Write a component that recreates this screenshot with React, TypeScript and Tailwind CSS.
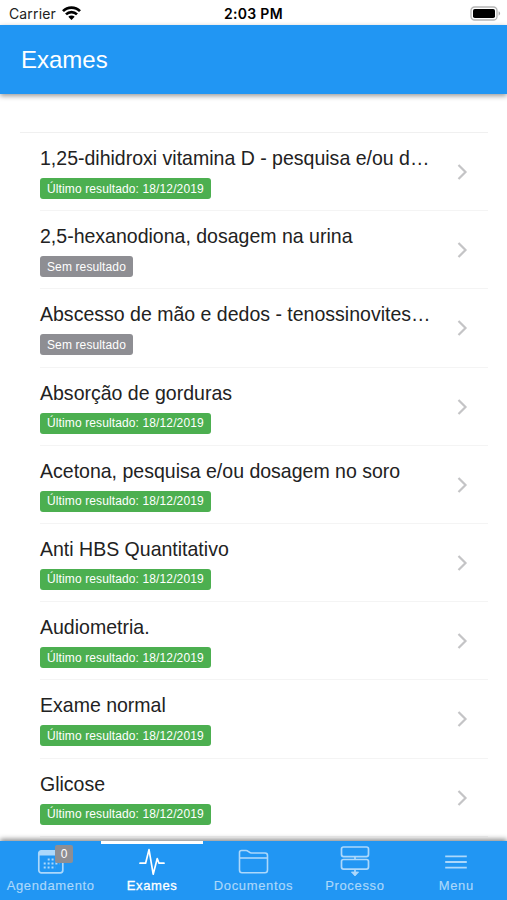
import type { ReactNode } from "react";

type Exam = {
  name: string;
  result?: string;
};

const exams: Exam[] = [
  { name: "1,25-dihidroxi vitamina D - pesquisa e/ou d…", result: "18/12/2019" },
  { name: "2,5-hexanodiona, dosagem na urina" },
  { name: "Abscesso de mão e dedos - tenossinovites…" },
  { name: "Absorção de gorduras", result: "18/12/2019" },
  { name: "Acetona, pesquisa e/ou dosagem no soro", result: "18/12/2019" },
  { name: "Anti HBS Quantitativo", result: "18/12/2019" },
  { name: "Audiometria.", result: "18/12/2019" },
  { name: "Exame normal", result: "18/12/2019" },
  { name: "Glicose", result: "18/12/2019" },
];

function StatusBar() {
  return (
    <div className="grid h-[25px] shrink-0 grid-cols-3 items-center bg-white pt-[3px] font-[Inter,sans-serif] text-black">
      <div className="flex items-center gap-[6px] pl-[9px]">
        <span className="text-[14px] leading-none tracking-[0.01em] text-[#222]">Carrier</span>
        <svg width="19" height="14" viewBox="0 0 19 14" className="-mt-[2px]">
          <g fill="none" stroke="#000" strokeWidth="2.7">
            <path d="M1 5.1A12 12 0 0 1 18 5.1" />
            <path d="M4 8.4A7.8 7.8 0 0 1 15 8.4" />
          </g>
          <path d="M6.3 10.7A4.6 4.6 0 0 1 12.7 10.7L9.5 13.9Z" fill="#000" />
        </svg>
      </div>
      <span className="text-center text-[14px] leading-none font-semibold tracking-[0.02em] whitespace-nowrap">2:03 PM</span>
      <div className="flex justify-end pr-[6px]">
        <svg width="31" height="15" viewBox="0 0 31 15" className="-mt-[2px]">
          <rect x="1" y="1" width="26" height="13" rx="3.6" fill="#fff" stroke="#b5b5b5" strokeWidth="1.3" />
          <rect x="3" y="3" width="22" height="9" rx="1.8" fill="#000" />
          <path d="M28.6 5.3a2.4 2.4 0 0 1 0 4.4z" fill="#a8a8a8" />
        </svg>
      </div>
    </div>
  );
}

function ExamRow({ name, result }: Exam) {
  return (
    <li className="flex h-[78.2px] border-b border-[#f4f4f4]">
      <div className="min-w-0 flex-1 pt-[12px]">
        <h2 className="text-[19.53px] leading-[26px] whitespace-nowrap text-[#222]">{name}</h2>
        <span
          className={`mt-[7px] flex h-[21px] w-fit items-center rounded-[3px] px-[7px] text-[12px] tracking-[0.01em] text-white ${
            result ? "bg-[#4caf50]" : "bg-[#8e8e93]"
          }`}
        >
          {result ? `Último resultado: ${result}` : "Sem resultado"}
        </span>
      </div>
      <svg width="12" height="18" viewBox="0 0 12 18" className="mt-[30px] mr-[20px]" fill="none" stroke="#c4c4c6" strokeWidth="2.2">
        <path d="M2.5 2L9.5 9L2.5 16" />
      </svg>
    </li>
  );
}

function CalendarIcon() {
  return (
    <svg width="28" height="26" viewBox="0 0 28 26" fill="none">
      <rect x="1.8" y="1.8" width="24" height="22" rx="2.5" stroke="currentColor" strokeWidth="1.7" />
      <path d="M1.8 6.5V4.3a2.5 2.5 0 0 1 2.5-2.5h19a2.5 2.5 0 0 1 2.5 2.5v2.2z" fill="currentColor" />
      <path d="M10.7 10.5H22.5M6.7 14.5H22.5M6.7 18.5H18.5" stroke="currentColor" strokeWidth="2" strokeDasharray="2 1.9" />
    </svg>
  );
}

function PulseIcon() {
  return (
    <svg width="26" height="28" viewBox="0 0 26 28" fill="none" stroke="currentColor" strokeWidth="1.7" strokeLinejoin="round" strokeLinecap="round">
      <path d="M1 15.2H6.6L10 1.6L14.2 26.2L18.2 10.6L20 15.2H25" />
    </svg>
  );
}

function FolderIcon() {
  return (
    <svg width="31" height="26" viewBox="0 0 31 26" fill="none" stroke="currentColor" strokeWidth="1.6" strokeLinejoin="round">
      <path d="M1.5 21V3.5Q1.5 1.5 3.5 1.5H8Q9.3 1.5 10.2 2.3L11.3 3.2Q12.2 4 13.5 4H27Q29.5 4 29.5 6.5V21Q29.5 23.7 27 23.7H4Q1.5 23.7 1.5 21Z" />
      <path d="M1.5 9H29.5" />
    </svg>
  );
}

function ProcessIcon() {
  return (
    <svg width="30" height="32" viewBox="0 0 30 32" fill="none" stroke="currentColor" strokeWidth="1.7">
      <rect x="1.5" y="1" width="27" height="9.6" rx="2" />
      <rect x="1.5" y="13.5" width="27" height="9.6" rx="2" />
      <path d="M15 10.6V13.5M15 23V27" />
      <path d="M11.4 26H18.6L15 30Z" fill="currentColor" stroke="currentColor" strokeWidth="0.8" strokeLinejoin="round" />
    </svg>
  );
}

function MenuIcon() {
  return (
    <svg width="24" height="16" viewBox="0 0 24 16" stroke="currentColor" strokeWidth="1.8">
      <path d="M1.2 2.4H22.8M1.2 8H22.8M1.2 13.6H22.8" />
    </svg>
  );
}

type TabProps = {
  label: string;
  icon: ReactNode;
  active?: boolean;
  badge?: number;
};

function Tab({ label, icon, active, badge }: TabProps) {
  return (
    <button
      className={`relative flex h-full flex-col items-center border-t-[3px] ${
        active ? "border-white text-white" : "border-transparent text-[#acd8fb]"
      }`}
    >
      <span className="flex h-[34px] items-center pt-[1px]">{icon}</span>
      <span className={`text-[13px] leading-[15px] tracking-[0.05em] ${active ? "[-webkit-text-stroke:0.3px_#fff]" : "[-webkit-text-stroke:0.15px_#acd8fb]"}`}>
        {label}
      </span>
      {badge !== undefined && (
        <span className="absolute top-[1px] left-[55px] flex h-[18px] w-[18px] items-center justify-center rounded-[2px] bg-[#8e8e93] text-[12px] text-white">
          {badge}
        </span>
      )}
    </button>
  );
}

export default function App() {
  return (
    <div className="flex h-[900px] w-[507px] flex-col overflow-hidden bg-white font-['Liberation_Sans',Arial,sans-serif]">
      <StatusBar />
      <header className="z-10 flex h-[69px] shrink-0 items-center bg-[#2196f3] pl-[21px] shadow-[0_2px_5px_rgba(0,0,0,0.4)]">
        <h1 className="text-[24px] leading-none text-white">Exames</h1>
      </header>

      <main className="min-h-0 flex-1 overflow-hidden pt-[38px]">
        <ul className="mr-[19px] ml-[20px] border-t border-[#f0f0f0] pl-[20px]">
          {exams.map((exam) => (
            <ExamRow key={exam.name} {...exam} />
          ))}
        </ul>
      </main>

      <nav className="z-10 grid h-[59px] shrink-0 grid-cols-5 bg-[#2196f3] shadow-[0_-2px_5px_rgba(0,0,0,0.45)]">
        <Tab label="Agendamento" icon={<CalendarIcon />} badge={0} />
        <Tab label="Exames" icon={<PulseIcon />} active />
        <Tab label="Documentos" icon={<FolderIcon />} />
        <Tab label="Processo" icon={<ProcessIcon />} />
        <Tab label="Menu" icon={<MenuIcon />} />
      </nav>
    </div>
  );
}
